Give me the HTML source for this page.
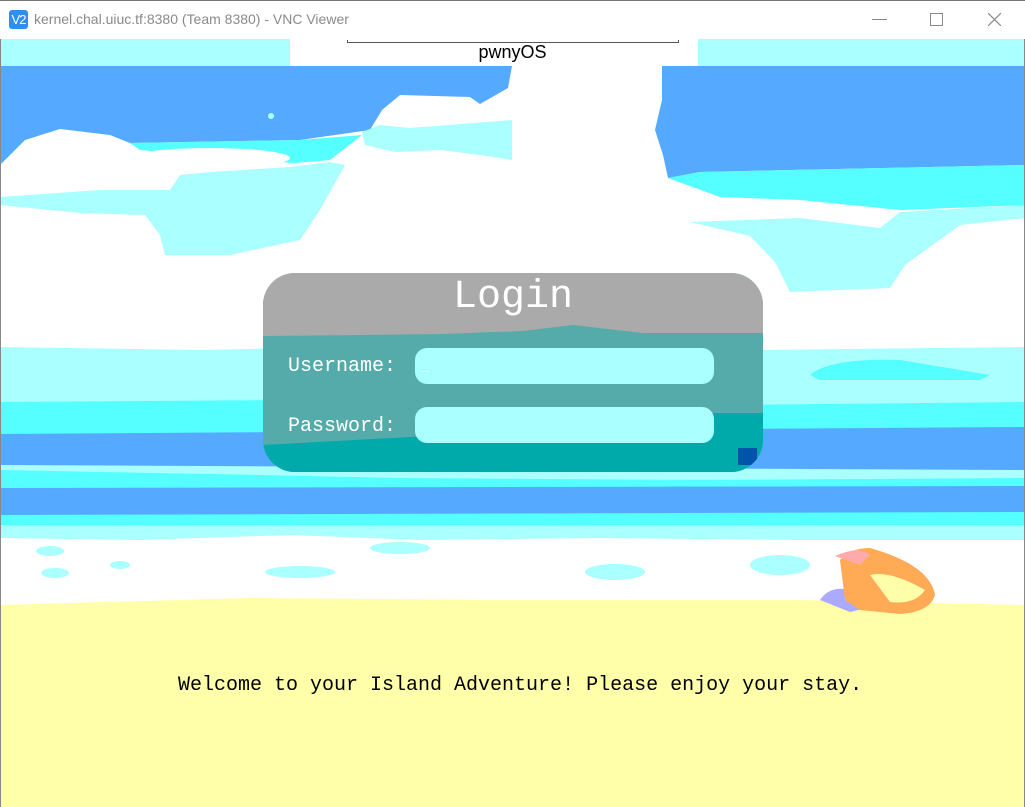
<!DOCTYPE html>
<html><head><meta charset="utf-8"><style>
html,body{margin:0;padding:0;width:1025px;height:807px;overflow:hidden;background:#fff;position:relative;font-family:"Liberation Sans",sans-serif}
.abs{position:absolute}
.mono{font-family:"Liberation Mono","DejaVu Sans Mono",monospace}
</style></head><body>
<div class="abs" style="left:0;top:0;width:1025px;height:1px;background:#777"></div>
<div class="abs" style="left:9px;top:10px;width:19px;height:19px;background:#2f8ef0;border-radius:3px;color:#fff;font-size:13px;line-height:19px;text-align:center;letter-spacing:-1px">V2</div>
<div class="abs" style="left:34px;top:11px;font-size:14px;color:#8a8a8a">kernel.chal.uiuc.tf:8380 (Team 8380) - VNC Viewer</div>
<div class="abs" style="left:872px;top:19px;width:15px;height:1px;background:#888"></div>
<div class="abs" style="left:930px;top:13px;width:11px;height:11px;border:1px solid #888"></div>
<svg class="abs" style="left:988px;top:13px" width="13" height="13"><path d="M0 0L13 13M13 0L0 13" stroke="#888" stroke-width="1.2"/></svg>

<svg class="abs" style="left:0;top:39px" width="1025" height="768" viewBox="0 39 1025 768">
<rect x="0" y="39" width="1025" height="768" fill="#fff"/>
<rect x="0" y="39" width="290" height="27" fill="#aaffff"/>
<rect x="698" y="39" width="327" height="27" fill="#aaffff"/>
<!-- sky blue left -->
<path d="M0 66H512L508 88L480 104L470 97L400 95L382 110L370 130L300 140L130 143L110 135L60 129L25 140L0 165Z" fill="#55aaff"/>
<circle cx="271" cy="116" r="3" fill="#aaffff"/>
<!-- sky blue right -->
<path d="M662 66H1025V165L700 172L668 178L663 155L655 130L662 100Z" fill="#55aaff"/>
<!-- cyan bands -->
<path d="M668 178L700 172L1025 165V205L900 210L800 200L720 197Z" fill="#55ffff"/>
<path d="M130 143L300 140L362 135L330 160L295 163L250 160L140 150Z" fill="#55ffff"/>
<!-- light cyan regions -->
<path d="M0 197L100 190L170 190L180 175L210 172L290 167L330 162L345 165L320 210L300 240L230 255L165 255L160 235L145 215L80 213L0 205Z" fill="#aaffff"/>
<ellipse cx="210" cy="158" rx="80" ry="10" fill="#fff"/>
<path d="M362 132L380 125L410 128L512 120V160L480 155L440 150L395 152L365 145Z" fill="#aaffff"/>
<path d="M690 222L800 218L880 228L900 212L1025 205V218L960 225L905 265L890 288L790 292L775 262L750 236Z" fill="#aaffff"/>
<!-- ocean -->
<path d="M0 347L200 350L400 346L760 350L1025 347V600H0Z" fill="#aaffff"/>
<path d="M810 375Q830 358 900 360L990 375L980 380L820 380Z" fill="#55ffff"/>
<path d="M0 402L300 400L520 407L1025 402V440H0Z" fill="#55ffff"/>
<path d="M0 434L1025 427V470L0 465Z" fill="#55aaff"/>
<path d="M0 470L260 475L400 478L700 480L1025 478V488L0 488Z" fill="#55ffff"/>
<path d="M0 488L1025 486V515L780 518L0 515Z" fill="#55aaff"/>
<path d="M0 515L1025 512V525L0 525Z" fill="#55ffff"/>
<!-- foam -->
<path d="M0 538L140 540L290 535L420 540L600 538L800 540L1025 540V600H0Z" fill="#fff"/>
<ellipse cx="50" cy="551" rx="14" ry="5" fill="#aaffff"/>
<ellipse cx="55" cy="573" rx="14" ry="5" fill="#aaffff"/>
<ellipse cx="120" cy="565" rx="10" ry="4" fill="#aaffff"/>
<ellipse cx="300" cy="572" rx="35" ry="6" fill="#aaffff"/>
<ellipse cx="400" cy="548" rx="30" ry="6" fill="#aaffff"/>
<ellipse cx="615" cy="572" rx="30" ry="8" fill="#aaffff"/>
<ellipse cx="780" cy="565" rx="30" ry="10" fill="#aaffff"/>
<!-- sand -->
<path d="M0 605L250 598L500 600L800 600L1025 605V807H0Z" fill="#ffffaa"/>
<!-- shell -->
<path d="M820 600Q830 585 850 590L880 605L850 612Z" fill="#aaaaff"/>
<path d="M840 560Q850 548 870 548Q930 565 935 595Q930 612 900 614L860 610L845 600Z" fill="#ffaa55"/>
<path d="M870 575Q890 570 925 590Q915 605 890 602Z" fill="#ffffaa"/>
<path d="M835 556Q860 545 870 555L860 565Z" fill="#ffaaaa"/>
<rect x="0" y="39" width="1" height="768" fill="#888"/>
<rect x="1024" y="39" width="1" height="768" fill="#888"/>
</svg>

<div class="abs" style="left:347px;top:40px;width:330px;height:2px;border:1px solid #555;border-top:none"></div>
<div class="abs" style="left:290px;top:42px;width:445px;text-align:center;font-size:18px;color:#000">pwnyOS</div>

<div class="abs" style="left:263px;top:273px;width:500px;height:199px;border-radius:32px;overflow:hidden;background:#55aaaa">
  <svg class="abs" style="left:0;top:0" width="500" height="199">
    <path d="M0 0H500V60L380 60L310 52L260 58L180 61L100 62L0 63Z" fill="#aaaaaa"/>
    <path d="M0 172L220 160L370 160L380 140L500 140V199H0Z" fill="#00aaaa"/>
    <rect x="475" y="175" width="19" height="17" fill="#0055aa"/>
  </svg>
</div>
<div class="abs mono" style="left:263px;top:272px;width:500px;text-align:center;font-size:40px;color:#fff;line-height:52px">Login</div>
<div class="abs mono" style="left:288px;top:355px;font-size:20px;color:#fff">Username:</div>
<div class="abs mono" style="left:288px;top:415px;font-size:20px;color:#fff">Password:</div>
<div class="abs" style="left:415px;top:348px;width:299px;height:36px;border-radius:12px;background:#aaffff"></div>
<div class="abs" style="left:421px;top:371px;width:9px;height:1px;background:#fff"></div>
<div class="abs" style="left:415px;top:407px;width:299px;height:36px;border-radius:12px;background:#aaffff"></div>

<div class="abs mono" style="left:178px;top:674px;font-size:20px;color:#000">Welcome to your Island Adventure! Please enjoy your stay.</div>
</body></html>
